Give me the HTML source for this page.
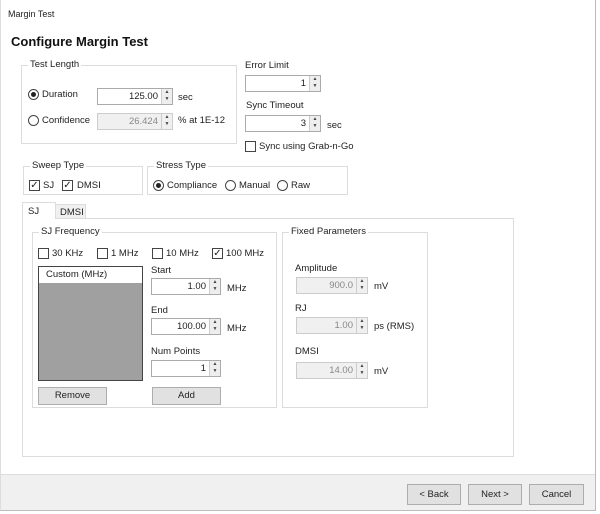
<!DOCTYPE html>
<html><head><style>
*{box-sizing:border-box;margin:0;padding:0}
body{width:600px;height:514px;background:#fff;font-family:"Liberation Sans",sans-serif;font-size:9.5px;color:#222;position:relative;overflow:hidden}
.a{position:absolute;white-space:nowrap}
.win{position:absolute;left:0;top:0;width:596px;height:511px;border:1px solid #bbb;border-top:none;border-left:1px solid #ddd}
.grp{position:absolute;border:1px solid #dcdcdc}
.grp>span{position:absolute;top:-7px;left:6px;background:#fff;padding:0 2px}
.inp{position:absolute;border:1px solid #aaa;background:#fff;height:17px;text-align:right;padding-right:14px;line-height:15px}
.inp.dis{background:#f0f0f0;border-color:#ccc;color:#888}
.inp i{position:absolute;right:0;top:0;width:11px;height:15px;background:#eee;border-left:1px solid #ccc;font-style:normal;font-size:5px;line-height:7px;text-align:center;color:#444}
.rad{position:absolute;width:11px;height:11px;border:1px solid #444;border-radius:50%;background:#fff}
.rad.on::after{content:"";position:absolute;left:2px;top:2px;width:5px;height:5px;border-radius:50%;background:#222}
.chk{position:absolute;width:11px;height:11px;border:1px solid #444;background:#fff;font-size:10px;line-height:9px;text-align:center}
.btn{position:absolute;border:1px solid #adadad;background:#e1e1e1;text-align:center;line-height:16px}
</style></head><body>
<div class="win"></div>
<div class="a" style="left:8px;top:9px;font-size:9px">Margin Test</div>
<div class="a" style="left:11px;top:34px;font-size:13px;font-weight:bold;color:#111">Configure Margin Test</div>

<div class="grp" style="left:21px;top:65px;width:216px;height:79px"><span>Test Length</span></div>
<div class="rad on" style="left:28px;top:89px"></div><div class="a" style="left:42px;top:89px">Duration</div>
<div class="inp" style="left:97px;top:88px;width:76px">125.00<i>▲<br>▼</i></div><div class="a" style="left:178px;top:92px">sec</div>
<div class="rad" style="left:28px;top:115px"></div><div class="a" style="left:42px;top:115px">Confidence</div>
<div class="inp dis" style="left:97px;top:113px;width:76px">26.424<i style="background:#f0f0f0">▲<br>▼</i></div><div class="a" style="left:178px;top:115px">% at 1E-12</div>

<div class="a" style="left:245px;top:60px">Error Limit</div>
<div class="inp" style="left:245px;top:75px;width:76px">1<i>▲<br>▼</i></div>
<div class="a" style="left:246px;top:100px">Sync Timeout</div>
<div class="inp" style="left:245px;top:115px;width:76px">3<i>▲<br>▼</i></div><div class="a" style="left:327px;top:120px">sec</div>
<div class="chk" style="left:245px;top:141px"></div><div class="a" style="left:259px;top:141px">Sync using Grab-n-Go</div>

<div class="grp" style="left:23px;top:166px;width:120px;height:29px"><span>Sweep Type</span></div>
<div class="chk" style="left:29px;top:180px">✓</div><div class="a" style="left:43px;top:180px">SJ</div>
<div class="chk" style="left:62px;top:180px">✓</div><div class="a" style="left:77px;top:180px">DMSI</div>
<div class="grp" style="left:147px;top:166px;width:201px;height:29px"><span>Stress Type</span></div>
<div class="rad on" style="left:153px;top:180px"></div><div class="a" style="left:167px;top:180px">Compliance</div>
<div class="rad" style="left:225px;top:180px"></div><div class="a" style="left:239px;top:180px">Manual</div>
<div class="rad" style="left:277px;top:180px"></div><div class="a" style="left:291px;top:180px">Raw</div>

<div class="a" style="left:22px;top:218px;width:492px;height:239px;border:1px solid #dcdcdc"></div>
<div class="a" style="left:22px;top:202px;width:34px;height:17px;border:1px solid #dcdcdc;border-bottom:none;background:#fff;padding:3px 0 0 5px">SJ</div>
<div class="a" style="left:55px;top:204px;width:31px;height:14px;border:1px solid #dcdcdc;border-bottom:none;background:#f0f0f0;padding:2px 0 0 4px">DMSI</div>

<div class="grp" style="left:32px;top:232px;width:245px;height:176px"><span>SJ Frequency</span></div>
<div class="chk" style="left:38px;top:248px"></div><div class="a" style="left:52px;top:248px">30 KHz</div>
<div class="chk" style="left:97px;top:248px"></div><div class="a" style="left:111px;top:248px">1 MHz</div>
<div class="chk" style="left:152px;top:248px"></div><div class="a" style="left:166px;top:248px">10 MHz</div>
<div class="chk" style="left:212px;top:248px">✓</div><div class="a" style="left:226px;top:248px">100 MHz</div>
<div class="a" style="left:38px;top:266px;width:105px;height:115px;border:1px solid #444;background:#a0a0a0"><div style="background:#fff;height:16px;padding:2px 0 0 7px">Custom (MHz)</div></div>
<div class="a" style="left:151px;top:265px">Start</div>
<div class="inp" style="left:151px;top:278px;width:70px">1.00<i>▲<br>▼</i></div><div class="a" style="left:227px;top:283px">MHz</div>
<div class="a" style="left:151px;top:305px">End</div>
<div class="inp" style="left:151px;top:318px;width:70px">100.00<i>▲<br>▼</i></div><div class="a" style="left:227px;top:323px">MHz</div>
<div class="a" style="left:151px;top:346px">Num Points</div>
<div class="inp" style="left:151px;top:360px;width:70px">1<i>▲<br>▼</i></div>
<div class="btn" style="left:38px;top:387px;width:69px;height:18px">Remove</div>
<div class="btn" style="left:152px;top:387px;width:69px;height:18px">Add</div>

<div class="grp" style="left:282px;top:232px;width:146px;height:176px"><span>Fixed Parameters</span></div>
<div class="a" style="left:295px;top:263px">Amplitude</div>
<div class="inp dis" style="left:296px;top:277px;width:72px">900.0<i style="background:#f0f0f0">▲<br>▼</i></div><div class="a" style="left:374px;top:281px">mV</div>
<div class="a" style="left:295px;top:303px">RJ</div>
<div class="inp dis" style="left:296px;top:317px;width:72px">1.00<i style="background:#f0f0f0">▲<br>▼</i></div><div class="a" style="left:374px;top:321px">ps (RMS)</div>
<div class="a" style="left:295px;top:346px">DMSI</div>
<div class="inp dis" style="left:296px;top:362px;width:72px">14.00<i style="background:#f0f0f0">▲<br>▼</i></div><div class="a" style="left:374px;top:366px">mV</div>

<div class="a" style="left:1px;top:474px;width:594px;height:36px;background:#f0f0f0;border-top:1px solid #dcdcdc"></div>
<div class="btn" style="left:407px;top:484px;width:54px;height:21px;line-height:19px">&lt; Back</div>
<div class="btn" style="left:468px;top:484px;width:54px;height:21px;line-height:19px">Next &gt;</div>
<div class="btn" style="left:529px;top:484px;width:55px;height:21px;line-height:19px">Cancel</div>
</body></html>
